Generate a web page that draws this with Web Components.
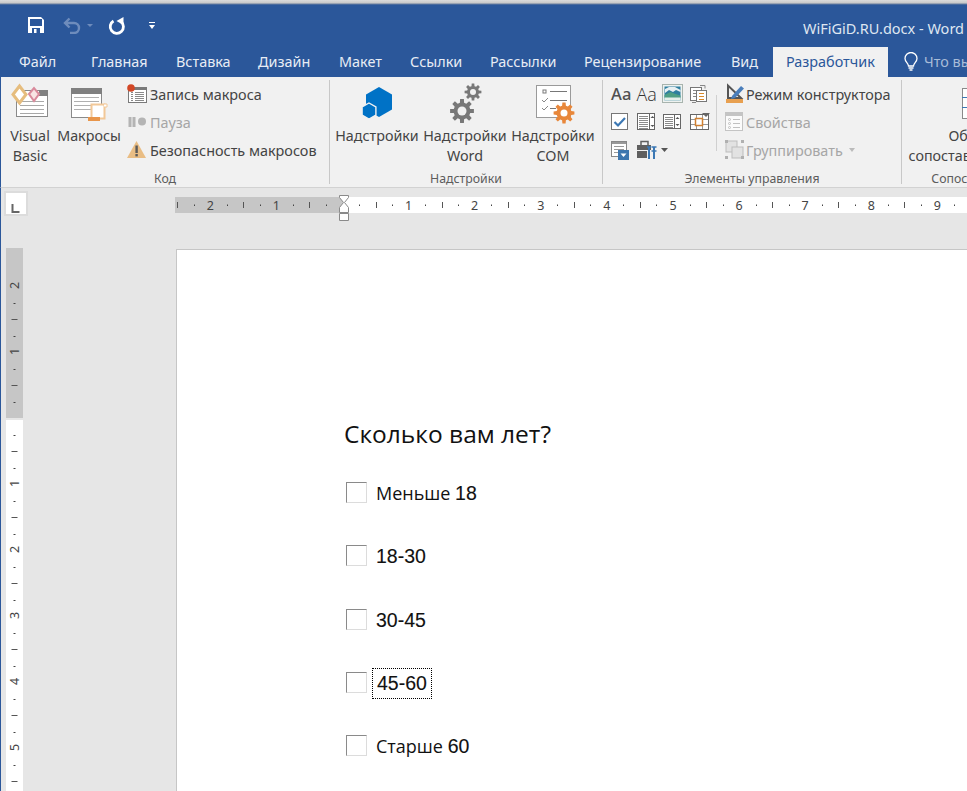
<!DOCTYPE html>
<html lang="ru"><head><meta charset="utf-8"><title>Word</title>
<style>
html,body{margin:0;padding:0;width:967px;height:791px;overflow:hidden;background:#e6e6e6;font-family:"Noto Sans","Open Sans",sans-serif}
w-app{width:967px;height:791px}
</style></head><body>
<w-app>
  <w-titlebar></w-titlebar>
  <w-tabs></w-tabs>
  <w-ribbon>
    <w-group label="Код" w="329">
      <w-big w="58" icon="vb">Visual<br>Basic</w-big>
      <w-big w="60" icon="macros">Макросы</w-big>
      <w-small-list style="margin-left:8px">
        <w-small icon="record">Запись макроса</w-small>
        <w-small icon="pause" disabled>Пауза</w-small>
        <w-small icon="warn">Безопасность макросов</w-small>
      </w-small-list>
    </w-group>
    <w-group label="Надстройки" w="273" pad="3">
      <w-big w="88" icon="addin">Надстройки</w-big>
      <w-big w="88" icon="gears">Надстройки<br>Word</w-big>
      <w-big w="88" icon="com">Надстройки<br>COM</w-big>
    </w-group>
    <w-group label="Элементы управления" w="299" pad="6">
      <w-control-grid></w-control-grid>
      <w-small-list style="margin-left:1px;border-left:1px solid #d0d0d0;padding-left:8px;height:56px;margin-top:15px">
        <w-small icon="design" style="margin-top:-15px" gap="1">Режим конструктора</w-small>
        <w-small icon="props" disabled gap="1">Свойства</w-small>
        <w-small icon="grp" disabled gap="1" arrow>Группировать</w-small>
      </w-small-list>
    </w-group>
    <w-group label="Сопоставление" w="150" noborder>
      <w-big w="150" icon="map">Область<br>сопоставления XML</w-big>
    </w-group>
  </w-ribbon>
  <w-workspace>
    <w-hruler slot="top"></w-hruler>
    <w-vruler slot="left"></w-vruler>
    <w-page>
      <w-heading>Сколько вам лет?</w-heading>
      <w-option>Меньше <b>18</b></w-option>
      <w-option><b>18-30</b></w-option>
      <w-option><b>30-45</b></w-option>
      <w-option focus><b>45-60</b></w-option>
      <w-option>Старше <b>60</b></w-option>
    </w-page>
  </w-workspace>
</w-app>
<script>
function gear(cx,cy,R,r,hole,n,fill,bg){
  let pts=[];const st=Math.PI*2/n;
  for(let i=0;i<n;i++){const a=i*st-Math.PI/2;
    const p=(d,rad)=>{const t=a+d*st;pts.push((cx+rad*Math.cos(t)).toFixed(1)+','+(cy+rad*Math.sin(t)).toFixed(1))};
    p(-.2,R);p(.2,R);p(.32,r);p(.68,r);
  }
  return `<polygon points="${pts.join(' ')}" fill="${fill}"/><circle cx="${cx}" cy="${cy}" r="${hole}" fill="${bg}"/>`;
}
function hex(cx,cy,r,f,s){let p=[];for(let i=0;i<6;i++){const t=Math.PI/3*i-Math.PI/2;p.push((cx+r*Math.cos(t)).toFixed(1)+','+(cy+r*Math.sin(t)).toFixed(1))}
  return `<polygon points="${p.join(' ')}" fill="${f}" stroke="${s||'none'}" stroke-width="1.4"/>`}
function lines(x1,x2,ys,c){return ys.map(y=>`<path d="M${x1} ${y}.5H${x2}" stroke="${c}"/>`).join('')}
const bg='#f1f1f1';
const ICONS={
vb:[40,38,`<rect x="6.500" y="9.500" width="31" height="26" fill="#fff" stroke="#8a8a8a"/><rect x="29" y="9" width="9" height="6" fill="#808080"/>${lines(10,34,[20,24,28,32],'#a8a8a8')}
 <path d="M3 13.500L9.500 5 16 13.500 9.500 22Z" fill="#fff" stroke="#e6bd7e" stroke-width="3"/><path d="M19 13L24 7l5 6-5 7Z" fill="#f8e4e4" stroke="#d98a9c" stroke-width="2"/>`],
macros:[38,38,`<rect x="1.500" y="7.500" width="30" height="29" fill="#fff" stroke="#8a8a8a"/><rect x="1" y="7" width="31" height="6" fill="#808080"/>${lines(4,29,[16,20,24,28],'#b0b0b0')}
 <path d="M21.500 23.500h13v14h-13Z" fill="#fff" stroke="#f2c898" stroke-width="2"/><path d="M18 36h12v4H18Z" fill="#e8954a"/><path d="M34 23h3v3h-3" fill="#fff" stroke="#f2c898"/>`],
record:[22,22,`<rect x="1.500" y="4.500" width="18" height="15" fill="#fff" stroke="#7a7a7a"/><rect x="1" y="4" width="19" height="3" fill="#7a7a7a"/><g fill="#8a8a8a"><rect x="4" y="9" width="2" height="1"/><rect x="8" y="9" width="9" height="1"/><rect x="4" y="11" width="2" height="1"/><rect x="8" y="11" width="9" height="1"/><rect x="4" y="13" width="2" height="1"/><rect x="8" y="13" width="9" height="1"/><rect x="4" y="15" width="2" height="1"/><rect x="8" y="15" width="9" height="1"/><rect x="4" y="17" width="2" height="1"/><rect x="8" y="17" width="9" height="1"/></g><circle cx="4" cy="5" r="3.800" fill="#d24726"/>`],
pause:[22,22,`<rect x="1.500" y="6" width="3" height="10" fill="#b4b4b4"/><rect x="5.500" y="6" width="3" height="10" fill="#b4b4b4"/><circle cx="15" cy="10.500" r="4" fill="#b4b4b4"/>`],
warn:[22,22,`<path d="M9.500 2L19 19H0Z" fill="#e9bd84"/><rect x="8.400" y="6.500" width="2.400" height="7.500" fill="#5a5a5a"/><rect x="8.400" y="15" width="2.400" height="2.400" fill="#5a5a5a"/>`],
addin:[46,38,`${hex(25,21,15,'#0072c6')}${hex(15,30,8,'#0072c6',bg)}`],
gears:[46,38,`${gear(31,11,8.500,6,3,8,'#787878',bg)}${gear(20,30,12,8.500,4.500,8,'#787878',bg)}`],
com:[46,40,`<rect x="6.500" y="4.500" width="34" height="32" fill="#fff" stroke="#9a9a9a"/><rect x="13" y="9" width="3" height="3" fill="none" stroke="#7a7a7a"/><path d="M20 10.500h17M20 19.500h17M20 27.500h6" stroke="#777"/><path d="M12 19l2 2 4-4M12 27l2 2 4-4" fill="none" stroke="#888"/>${gear(34,32,10.500,7.500,3.500,8,'#e8873a','#fff')}`],
design:[20,22,`<path d="M3 2.500V15H16Z" fill="none" stroke="#555" stroke-width="2"/><path d="M7 13L16 3l3 2.500-9 9.500-4 1Z" fill="#4a7ebb"/><rect x="1" y="16" width="17" height="4" fill="#e8a050"/>`],
props:[20,22,`<rect x=".5" y="1.500" width="17" height="18" fill="#fbfbfb" stroke="#c4c4c4"/><rect x="1" y="2" width="16" height="3" fill="#c4c4c4"/>${lines(8,15,[8,12,16],'#c0c0c0')}<g fill="none" stroke="#c0c0c0"><circle cx="4.500" cy="8.500" r="1"/><circle cx="4.500" cy="12.500" r="1"/><circle cx="4.500" cy="16.500" r="1"/></g>`],
grp:[20,22,`<rect x="1" y="2" width="11" height="11" fill="#e2e2e2" stroke="#bdbdbd"/><rect x="7" y="8" width="11" height="11" fill="#e2e2e2" stroke="#bdbdbd"/><g fill="#b0b0b0"><rect y="1" width="3" height="3"/><rect x="16" y="1" width="3" height="3"/><rect y="17" width="3" height="3"/><rect x="16" y="17" width="3" height="3"/></g>`],
pic:[22,20,`<rect x=".5" y=".5" width="20" height="18" fill="#eef2f0" stroke="#a8b4ae"/><rect x="2.500" y="2.500" width="16" height="14" fill="#2f7f9f"/><path d="M3 9l4-3 4 2 3-2 4.500 2V6L13 3H7L3 5Z" fill="#e8f0f2"/><path d="M2.500 14v-3l6-3 5 2 5 1.500V14Z" fill="#4f9f84"/><rect x="2.500" y="13.500" width="16" height="3" fill="#e6efe9"/>`],
block:[20,20,`<rect x="1.500" y="3.500" width="11" height="13" fill="#fff" stroke="#777"/><rect x="7.500" y="6.500" width="10" height="11" fill="#fff" stroke="#777"/><path d="M10 9.500h5M10 12.500h5M10 15.500h5" stroke="#d98a2b"/><path d="M4 6.500h3M4 9.500h3M4 12.500h3" stroke="#888"/><path d="M11 1.500h5v3M3 18.500h4" fill="none" stroke="#888"/>`],
check:[20,20,`<rect x="2.500" y="1.500" width="16" height="16" fill="#fff" stroke="#777"/><path d="M5.500 10l3.500 3.500 7-7.500" fill="none" stroke="#3c78b4" stroke-width="2.200"/>`],
list:[20,20,`<rect x="1.500" y="1.500" width="17" height="16" fill="#fff" stroke="#666"/>${lines(3,12,[4,6,8,10,12,14,16],'#8a8a8a')}<path d="M13.500 2v15" stroke="#666"/><path d="M14.500 6l2-2 2 2Z M14.500 13l2 2 2-2Z" fill="#555"/>`],
combo:[20,20,`<rect x="1.500" y="2.500" width="17" height="14" fill="#fff" stroke="#666"/>${lines(3,11,[5,7,9,11,13,15],'#8a8a8a')}<path d="M12.500 3v13" stroke="#666"/><path d="M13.500 7l2-2 2 2Z M13.500 12l2 2 2-2Z" fill="#555"/>`],
table:[22,20,`<rect x="1.500" y="2.500" width="18" height="15" fill="#fff" stroke="#666"/><path d="M7.500 3v14M13.500 3v14M2 7.500h17M2 12.500h17" stroke="#999"/><rect x="6.500" y="6.500" width="7" height="7" fill="#fff" stroke="#d08030" stroke-width="1.500"/><path d="M13 1h8l-4 4Z" fill="#666"/>`],
form:[20,22,`<rect x="2.500" y="2.500" width="15" height="15" fill="#fff" stroke="#888"/><rect x="3" y="3" width="14" height="2" fill="#999"/>${lines(5,15,[7,10,13],'#999')}<rect x="9" y="11" width="11" height="10" fill="#3d76ae"/><path d="M11.500 14.500h6l-3 3.500Z" fill="#fff"/>`],
tools:[24,22,`<path d="M1 6h14v5H1Z" fill="#5f5f5f"/><path d="M1 12h10v7H1Z" fill="#5f5f5f"/><path d="M5 6V2.500h7V6" fill="none" stroke="#5f5f5f" stroke-width="1.500"/><path d="M13 8v12" stroke="#3c78b4" stroke-width="2"/><path d="M18 8v12" stroke="#3c78b4" stroke-width="2"/><path d="M11 8h4M15.500 8h5M15.500 12h5" stroke="#3c78b4" stroke-width="1.500"/>`],
map:[32,38,`<rect x="1.500" y="7.500" width="30" height="30" fill="#fff" stroke="#8a8a8a"/><path d="M9 8v30M1 16.500h30M1 26.500h30" stroke="#3c78b4"/>`]
};
const svgFor=n=>{const i=ICONS[n];return `<svg width="${i[0]}" height="${i[1]}" viewBox="0 0 ${i[0]} ${i[1]}" style="display:block;overflow:visible">${i[2]}</svg>`};
function def(name,css,html,init){
  customElements.define(name,class extends HTMLElement{
    constructor(){super();this.attachShadow({mode:'open'})}
    connectedCallback(){
      const a=n=>this.getAttribute(n);
      const h=typeof html==='function'?html(a,this):html;
      this.shadowRoot.innerHTML=`<style>${css}</style>${h}`;
      if(init)init(this,a);
    }
  });
}
def('w-app',`:host{display:flex;flex-direction:column;overflow:hidden;color:#444;font-family:"Noto Sans","Open Sans",sans-serif}`,`<slot></slot>`);
def('w-titlebar',`:host{display:flex;align-items:center;height:47px;box-sizing:border-box;background:linear-gradient(#dcdcdc 0,#c8c8c8 3px,#6b7f9f 4px,#2b579a 5px);padding-top:10px;color:#fff;flex:none}
 .q{display:flex;align-items:center;margin:-7px 0 0 28px}
 .t{margin:-2px 3px 0 auto;font-size:14.500px;color:#dfe6f1;white-space:nowrap}
 svg{display:block;flex:none}`,
 `<div class="q">
  <svg width="16" height="16" viewBox="0 0 16 16"><path d="M0 0h13l3 3v13H0Z" fill="#fff"/><rect x="2" y="2" width="12" height="7" fill="#2b579a"/><rect x="4" y="11" width="8" height="5" fill="#2b579a"/><rect x="6" y="12" width="2.500" height="4" fill="#fff"/></svg>
  <svg style="margin-left:19px" width="20" height="18" viewBox="0 0 20 18"><path d="M2 7h9a5 5 0 0 1 0 10H7M6.500 2.500L2 7l4.500 4.500" fill="none" stroke="#6e8cbc" stroke-width="2.400"/></svg>
  <svg style="margin-left:3px" width="8" height="5" viewBox="0 0 8 5"><path d="M1 1h6L4 4Z" fill="#6e8cbc"/></svg>
  <svg style="margin-left:14px" width="18" height="19" viewBox="0 0 18 19"><path d="M5.500 5A6.600 6.600 0 1 0 13 5.600" fill="none" stroke="#fff" stroke-width="2.800"/><path d="M15.500 1V9L8.500 5Z" fill="#fff"/></svg>
  <svg style="margin-left:22px" width="8" height="9" viewBox="0 0 8 9"><path d="M1 1.500h6" stroke="#fff"/><path d="M1 4h6L4 8Z" fill="#fff"/></svg>
 </div><div class="t">WiFiGiD.RU.docx - Word</div>`);
def('w-tabs',`:host{display:flex;flex:none;height:30px;background:#2b579a;padding-left:19px;font-size:14.400px;line-height:30px;color:#e8edf5;white-space:nowrap;overflow:hidden}
 div{flex:none}
 .a{background:#f1f1f1;color:#2b579a;padding:0 13px;margin-left:-13px;width:89px;box-sizing:content-box;margin-right:16px}
 .s{display:flex;align-items:center;gap:6px;color:#a8bcd8}`,
 ()=>[['Файл',72],['Главная',85],['Вставка',82],['Дизайн',81],['Макет',71],['Ссылки',80],['Рассылки',94],['Рецензирование',147],['Вид',55]].map(([t,w])=>`<div style="width:${w}px">${t}</div>`).join('')+
 `<div class="a">Разработчик</div><div class="s"><svg width="14" height="20" viewBox="0 0 14 20"><path d="M4.500 14c0-3-3.500-4-3.500-7.500a6 6 0 0 1 12 0C13 10 9.500 11 9.500 14Z" fill="none" stroke="#fff" stroke-width="1.300"/><path d="M4.500 16h5M5.500 18h3" stroke="#fff" stroke-width="1.300"/></svg><span>Что вы хотите сделать?</span></div>`);
def('w-ribbon',`:host{display:flex;height:111px;box-sizing:border-box;background:#f1f1f1;border-bottom:1px solid #d2d2d2;border-left:1px solid #2b579a;padding-top:3px;flex:none;overflow:hidden;font-size:14.200px;color:#444}`,`<slot></slot>`);
def('w-group',`:host{display:flex;flex-direction:column;box-sizing:border-box;height:104px;flex:none;border-right:1px solid #c8c8c8}
 :host([noborder]){border-right:none}
 .b{display:flex;height:88px;flex:none}
 .l{text-align:center;font-size:12.300px;line-height:22px;height:16px;color:#5c5c5c;white-space:nowrap}`,
 (a)=>`<style>:host{width:${a('w')}px}.b{padding-left:${a('pad')||0}px}</style><div class="b"><slot></slot></div><div class="l">${a('label')}</div>`);
def('w-big',`:host{display:flex;flex-direction:column;align-items:center;flex:none;height:88px;white-space:nowrap}
 .i{height:46px;display:flex;align-items:flex-start;justify-content:center;padding-top:1px;box-sizing:border-box}
 .t{text-align:center;line-height:20px;font-size:14.300px}`,
 (a)=>`<style>:host{width:${a('w')}px}</style><div class="i">${svgFor(a('icon'))}</div><div class="t"><slot></slot></div>`);
def('w-small-list',`:host{display:flex;flex-direction:column;flex:none}`,`<slot></slot>`);
def('w-small',`:host{display:flex;align-items:center;height:28px;flex:none;white-space:nowrap;font-size:14.400px;color:#444}
 :host([disabled]){color:#a6a6a6}
 i{display:block;width:0;height:0;border:3px solid transparent;border-top:4px solid #bbb;border-bottom:0;margin-left:5px}`,
 (a,el)=>`<style>:host{gap:${a('gap')||1}px}</style>${svgFor(a('icon'))}<span><slot></slot></span>${el.hasAttribute('arrow')?'<i></i>':''}`);
def('w-control-grid',`:host{display:grid;grid-template-columns:repeat(4,26.500px);grid-auto-rows:28px;flex:none;align-items:center;width:106px}
 .aa{font-family:"Noto Sans",sans-serif;font-size:16.500px;line-height:20px;color:#505050;font-weight:500;padding-left:2px;letter-spacing:.3px}
 .thin{font-family:"Open Sans",sans-serif;font-weight:300;color:#333;font-size:18px;padding-left:1px;letter-spacing:0}
 .m{display:flex;align-items:center}`,
 `<div class="aa">Aa</div><div class="aa thin">Aa</div>${svgFor('pic')}${svgFor('block')}
  ${svgFor('check')}${svgFor('list')}${svgFor('combo')}${svgFor('table')}
  ${svgFor('form')}<div class="m" style="grid-column:span 2;gap:1px">${svgFor('tools')}<svg width="7" height="4" viewBox="0 0 7 4"><path d="M0 0h7L3.500 4Z" fill="#555"/></svg></div>`);
def('w-workspace',`:host{display:grid;grid-template-columns:176px 1fr;grid-template-rows:60px 1fr;flex:1;min-height:0;background:#e6e6e6;border-left:1px solid #2b579a;overflow:hidden}
 .t{grid-column:1/3;margin-left:-1px}.l{padding-left:5px}.p{min-width:0}`,
 `<div class="t"><slot name="top"></slot></div><div class="l"><slot name="left"></slot></div><div class="p" style="margin-left:-1px"><slot></slot></div>`);
function numTxt(x,y,t,rot){return `<text x="${x}" y="${y}" ${rot?`transform="rotate(-90 ${x} ${y})"`:''} text-anchor="middle" dominant-baseline="central" font-family="Noto Sans,Open Sans,sans-serif" font-size="12.500" fill="#444">${t}</text>`}
def('w-hruler',`:host{display:block;position:relative;height:60px}
 .corner{box-sizing:border-box;width:24px;height:25px;margin:3px 0 0 4px;background:#fff;border:2px solid #dcdcdc}
 svg{position:absolute;left:0;top:0}`,
 ()=>{let s='';const Z=342.500,st=66.100;
  s+=`<rect x="175" y="6" width="168" height="16" fill="#c6c6c6"/><rect x="343" y="6" width="624" height="16" fill="#fff"/>`;
  for(let k=-3;k<=10;k++){const x=Z+k*st;
    if(k!==0&&x>175&&x<967)s+=numTxt(x,14,Math.abs(k));
    [.25,.75].forEach(f=>{const px=x+f*st;if(px>175&&px<967)s+=`<rect x="${Math.round(px)}" y="13.500" width="1" height="1.500" fill="#444"/>`});
    const hx=x+.5*st;if(hx>175&&hx<967)s+=`<rect x="${Math.round(hx)}" y="11" width="1" height="6" fill="#555"/>`;
  }
  s+=`<path d="M339.500 4.500h9v2l-4 5 4 5v5h-9v-5l4-5-4-5Z" fill="#fff" stroke="#8a8a8a"/><path d="M339.500 22.500h9v7h-9Z" fill="#fff" stroke="#8a8a8a"/>`;
  return `<div class="corner"><svg width="30" height="30"><path d="M12.500 13v8h7" fill="none" stroke="#666" stroke-width="2"/></svg></div><svg width="967" height="40" viewBox="0 0 967 40">${s}</svg>`});
def('w-vruler',`:host{display:block;width:17px;height:543px}svg{display:block}`,
 ()=>{let s='';const Z=170,st=66;
  s+=`<rect width="17" height="170" fill="#c6c6c6"/><rect y="172" width="17" height="380" fill="#fff"/>`;
  for(let k=-2;k<=6;k++){const y=Z+k*st;
    if(k!==0&&y>0)s+=numTxt(8.500,y-.5,Math.abs(k),true);
    [.25,.75].forEach(f=>{const p=y+f*st;if(p>0)s+=`<rect x="7.500" y="${Math.round(p)}" width="2" height="1" fill="#444"/>`});
    const h=y+.5*st;if(h>0)s+=`<rect x="5.500" y="${Math.round(h)}" width="6" height="1" fill="#555"/>`;
  }
  return `<svg width="17" height="543" viewBox="0 0 17 543">${s}</svg>`});
def('w-page',`:host{display:block;box-sizing:border-box;height:600px;background:#fff;border:1px solid #c6c6c6;border-right:0;margin-top:1px;padding:166px 0 0 167px}`,`<slot></slot>`);
def('w-heading',`:host{display:block;font-family:"Open Sans","Noto Sans",sans-serif;font-size:24.500px;line-height:36px;color:#111;margin-bottom:10px;white-space:nowrap}`,`<slot></slot>`);
def('w-option',`:host{display:flex;align-items:center;height:63.250px;font-family:"Open Sans","Noto Sans",sans-serif;font-size:18px;color:#111;white-space:nowrap}
 .c{box-sizing:border-box;width:21px;height:21px;margin:-2px 7px 0 2px;border:1px solid;border-color:#8a8a8a #dcdcdc #dcdcdc #8a8a8a;flex:none}
 .t{padding:0 0 0 1px;border:1px solid transparent;line-height:29px;display:block}
 :host([focus]) .t{border:1px dotted #000;margin-left:-2px;padding:0 4px}
 ::slotted(b){font-family:"Liberation Sans",sans-serif;font-weight:normal;font-size:19.500px;-webkit-text-stroke:.12px #111}`,
 `<div class="c"></div><div class="t"><slot></slot></div>`);
</script>
</body></html>
